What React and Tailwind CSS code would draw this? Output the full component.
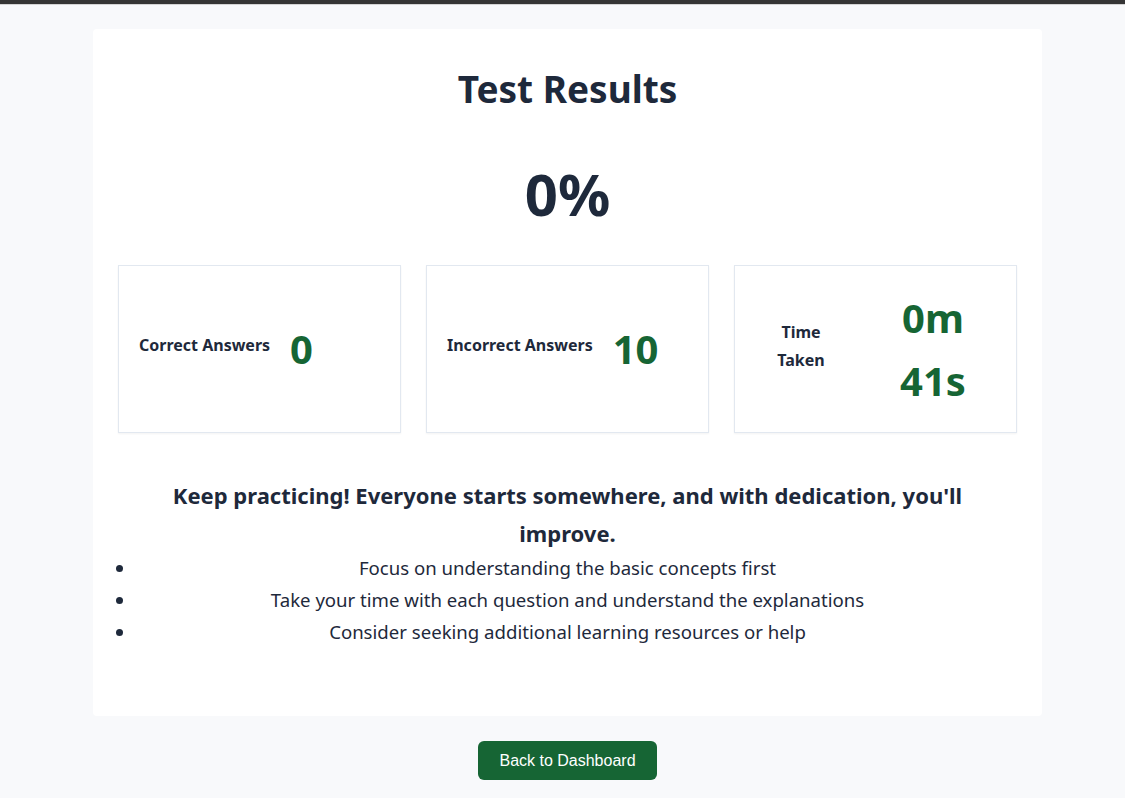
export default function App() {
  return (
    <div className="min-h-screen bg-[#f8f9fb] font-['Noto_Sans',sans-serif] text-[#1e293b]">
      {/* top bar */}
      <div className="h-[5px] bg-[#353535] border-b border-[#d4d4d4]" />

      <div className="ml-[93px] w-[949px] pt-[24px]">
        {/* results card */}
        <div className="bg-white rounded-[4px] px-[25px] pt-[38px] pb-[68px]">
          <h1 className="text-center text-[37px] font-bold leading-[44px]">
            Test Results
          </h1>

          <div className="mt-[47px] text-center text-[58px] font-bold leading-[72px]">
            0%
          </div>

          {/* stats */}
          <div className="mt-[35px] grid grid-cols-3 gap-[25px]">
            <div className="h-[168px] flex items-center gap-5 px-5 border border-[#e2e8f0] shadow-[0_1px_2px_rgba(0,0,0,0.05)]">
              <div className="text-[16px] font-bold leading-[28px] text-center -mt-[8px]">
                Correct Answers
              </div>
              <div className="text-[40px] font-bold leading-[64px] text-[#166534] text-center">
                0
              </div>
            </div>

            <div className="h-[168px] flex items-center gap-5 px-5 border border-[#e2e8f0] shadow-[0_1px_2px_rgba(0,0,0,0.05)]">
              <div className="text-[16px] font-bold leading-[28px] text-center -mt-[8px]">
                Incorrect Answers
              </div>
              <div className="text-[40px] font-bold leading-[64px] text-[#166534] text-center">
                10
              </div>
            </div>

            <div className="h-[168px] flex items-center gap-5 px-5 border border-[#e2e8f0] shadow-[0_1px_2px_rgba(0,0,0,0.05)]">
              <div className="w-[92px] shrink-0 text-[16px] font-bold leading-[28px] text-center -mt-[6px]">
                <span className="block max-w-[60px] mx-auto">Time Taken</span>
              </div>
              <div className="w-[132px] shrink-0 text-[40px] font-bold leading-[63px] text-[#166534] text-center">
                0m 41s
              </div>
            </div>
          </div>

          {/* feedback */}
          <div className="mt-[43px] px-[18px]">
            <h3 className="text-center text-[22px] font-bold leading-[38px]">
              Keep practicing! Everyone starts somewhere, and with dedication, you'll improve.
            </h3>
            <ul className="list-disc text-center text-[18.6px] leading-[32px]">
              <li>Focus on understanding the basic concepts first</li>
              <li>Take your time with each question and understand the explanations</li>
              <li>Consider seeking additional learning resources or help</li>
            </ul>
          </div>
        </div>

        {/* back button */}
        <div className="mt-[25px] flex justify-center">
          <button className="h-[39px] px-[21px] rounded-[6px] bg-[#166534] text-white text-[16px] font-['Liberation_Sans',Arial,sans-serif]">
            Back to Dashboard
          </button>
        </div>
      </div>
    </div>
  );
}
